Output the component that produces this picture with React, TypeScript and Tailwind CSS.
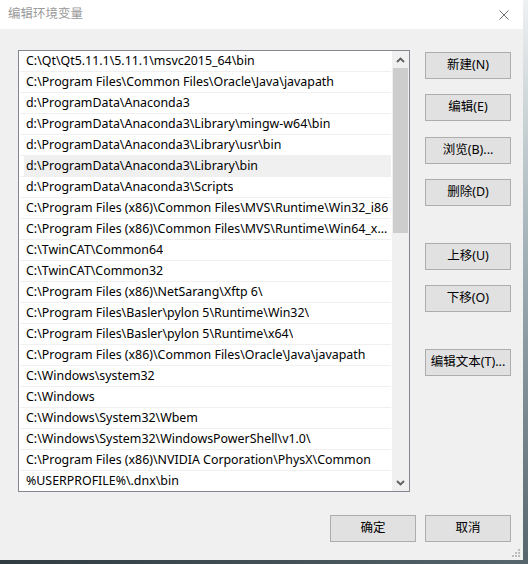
import React from "react";

const paths = [
  "C:\\Qt\\Qt5.11.1\\5.11.1\\msvc2015_64\\bin",
  "C:\\Program Files\\Common Files\\Oracle\\Java\\javapath",
  "d:\\ProgramData\\Anaconda3",
  "d:\\ProgramData\\Anaconda3\\Library\\mingw-w64\\bin",
  "d:\\ProgramData\\Anaconda3\\Library\\usr\\bin",
  "d:\\ProgramData\\Anaconda3\\Library\\bin",
  "d:\\ProgramData\\Anaconda3\\Scripts",
  "C:\\Program Files (x86)\\Common Files\\MVS\\Runtime\\Win32_i86",
  "C:\\Program Files (x86)\\Common Files\\MVS\\Runtime\\Win64_x64",
  "C:\\TwinCAT\\Common64",
  "C:\\TwinCAT\\Common32",
  "C:\\Program Files (x86)\\NetSarang\\Xftp 6\\",
  "C:\\Program Files\\Basler\\pylon 5\\Runtime\\Win32\\",
  "C:\\Program Files\\Basler\\pylon 5\\Runtime\\x64\\",
  "C:\\Program Files (x86)\\Common Files\\Oracle\\Java\\javapath",
  "C:\\Windows\\system32",
  "C:\\Windows",
  "C:\\Windows\\System32\\Wbem",
  "C:\\Windows\\System32\\WindowsPowerShell\\v1.0\\",
  "C:\\Program Files (x86)\\NVIDIA Corporation\\PhysX\\Common",
  "%USERPROFILE%\\.dnx\\bin",
];

const SELECTED = 5;

const font = {
  fontFamily: '"Noto Sans", "Noto Sans CJK SC", sans-serif',
};

function Btn({ label, className = "" }: { label: string; className?: string }) {
  return (
    <div
      className={`flex h-[27px] w-[86px] items-center justify-center border border-[#adadad] bg-[#e1e1e1] text-[12.5px] text-black ${className}`}
    >
      {label}
    </div>
  );
}

const App = () => {
  return (
    <div className="flex h-[564px] w-[528px] flex-col overflow-hidden bg-[#3f4f56]" style={font}>
      <div className="flex h-[560px]">
        <div className="flex w-[523px] flex-col bg-[#f0f0f0]">
          {/* title bar */}
          <div className="flex h-[29px] items-center justify-between bg-white pl-[8px] pr-[14px]">
            <span className="text-[12.5px] text-[#9a9a9a]">编辑环境变量</span>
            <svg width="10" height="10" viewBox="0 0 10 10">
              <path d="M0.5 0.5 L9.5 9.5 M9.5 0.5 L0.5 9.5" stroke="#707070" strokeWidth="1" />
            </svg>
          </div>

          <div className="flex flex-1 flex-col">
            <div className="flex pt-[21px] pl-[18px]">
              {/* path list */}
              <div className="flex h-[442px] w-[392px] border border-[#828790] bg-white">
                <div className="flex-1 overflow-hidden">
                  {paths.map((p, i) => (
                    <div
                      key={i}
                      className="mx-[1px] h-[21px] border-b border-[#f0f0f0]"
                    >
                      <div
                        className={`ml-[4px] flex h-full items-center pt-[1px] pl-[2px] pr-[1px] text-[12.4px] text-black ${
                          i === SELECTED ? "bg-[#f0f0f0]" : ""
                        }`}
                      >
                        <span className="truncate">{p}</span>
                      </div>
                    </div>
                  ))}
                </div>
                <div className="flex w-[17px] flex-col bg-[#f0f0f0]">
                  <div className="flex h-[17px] items-center justify-center">
                    <svg width="9" height="6" viewBox="0 0 9 6">
                      <path d="M1 5 L4.5 1.5 L8 5" fill="none" stroke="#606060" strokeWidth="1.8" />
                    </svg>
                  </div>
                  <div className="mx-[1px] h-[165px] bg-[#cdcdcd]" />
                  <div className="flex-1" />
                  <div className="flex h-[17px] items-center justify-center">
                    <svg width="9" height="6" viewBox="0 0 9 6">
                      <path d="M1 1 L4.5 4.5 L8 1" fill="none" stroke="#606060" strokeWidth="1.8" />
                    </svg>
                  </div>
                </div>
              </div>

              {/* side buttons */}
              <div className="ml-[15px] flex flex-col pt-[2px]">
                <Btn label="新建(N)" />
                <Btn label="编辑(E)" className="mt-[15px]" />
                <Btn label="浏览(B)..." className="mt-[16px]" />
                <Btn label="删除(D)" className="mt-[15px]" />
                <Btn label="上移(U)" className="mt-[37px]" />
                <Btn label="下移(O)" className="mt-[15px]" />
                <Btn label="编辑文本(T)..." className="mt-[37px]" />
              </div>
            </div>

            <div className="mt-[23px] flex justify-end gap-[9px] pr-[12px]">
              <Btn label="确定" />
              <Btn label="取消" />
            </div>

            <div className="mt-auto flex justify-end pr-[3px] pb-[3px]">
              <svg width="8" height="8" viewBox="0 0 8 8">
                <rect x="6" y="0" width="2" height="2" fill="#bdbdbd" />
                <rect x="3" y="3" width="2" height="2" fill="#bdbdbd" />
                <rect x="6" y="3" width="2" height="2" fill="#bdbdbd" />
                <rect x="0" y="6" width="2" height="2" fill="#bdbdbd" />
                <rect x="3" y="6" width="2" height="2" fill="#bdbdbd" />
                <rect x="6" y="6" width="2" height="2" fill="#bdbdbd" />
              </svg>
            </div>
          </div>
        </div>
        <div className="flex-1 bg-gradient-to-b from-[#eef1f2] via-[#9aaab0] to-[#56666c]" />
      </div>
      <div className="flex-1 bg-gradient-to-r from-[#2f3b40] to-[#56666c]" />
    </div>
  );
};

export default App;
